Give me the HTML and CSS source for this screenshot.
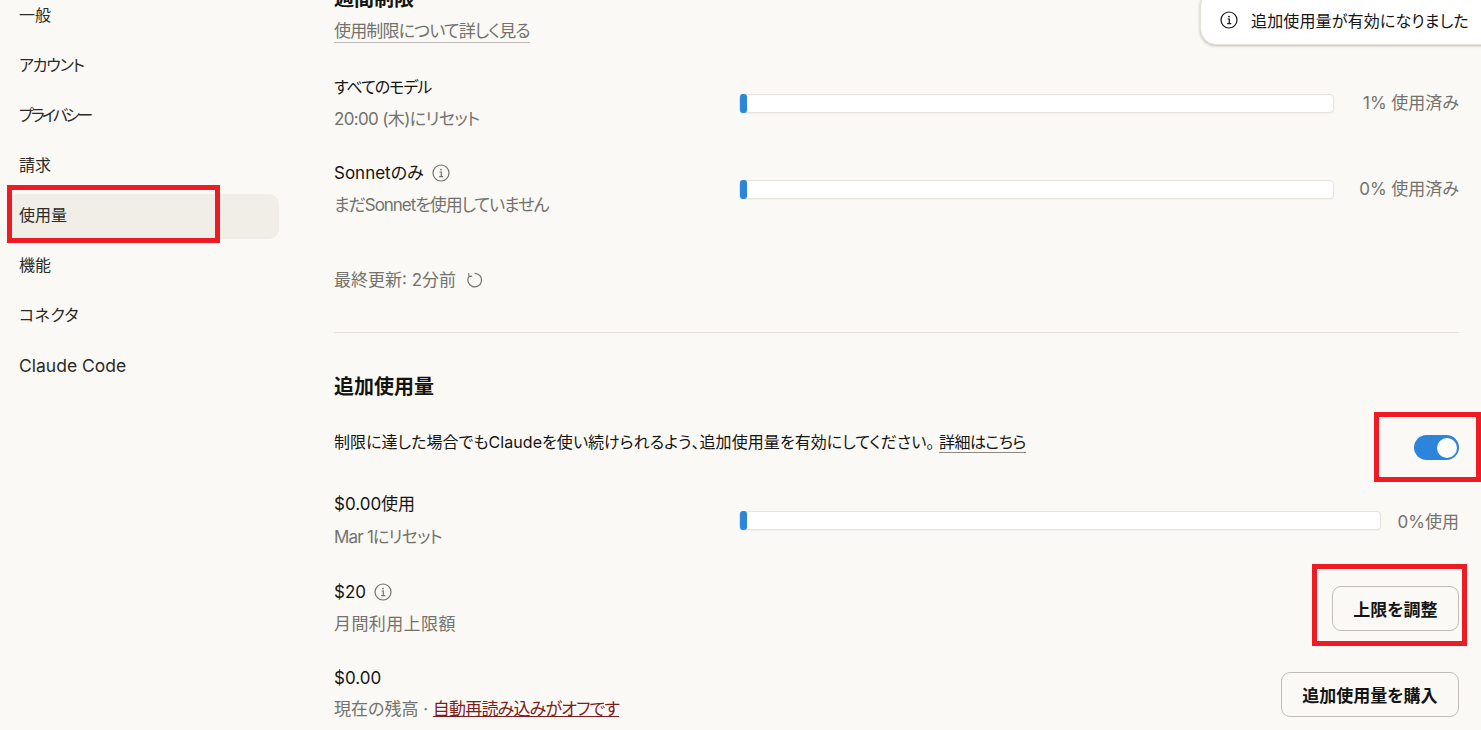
FILE: index.html
```html
<!DOCTYPE html>
<html lang="ja">
<head>
<meta charset="utf-8">
<title>使用量</title>
<link rel="stylesheet" href="styles.css">
</head>
<body>
<div class="page">
  <nav class="side">
    <a class="nav">一般</a>
    <a class="nav n-acct">アカウント</a>
    <a class="nav n-priv">プライバシー</a>
    <a class="nav">請求</a>
    <a class="nav active">使用量</a>
    <a class="nav">機能</a>
    <a class="nav n-conn">コネクタ</a>
    <a class="nav n-code">Claude Code</a>
  </nav>
  <main class="main">
    <h2 class="head first">週間制限</h2>
    <a class="learn">使用制限について詳しく見る</a>
    <div class="row r-all">
      <div class="lbl"><div class="t t-all">すべてのモデル</div><div class="s s-time">20:00 (木)にリセット</div></div>
      <div class="bar"><i></i></div>
      <div class="pct">1% 使用済み</div>
    </div>
    <div class="row r-son">
      <div class="lbl"><div class="t">Sonnetのみ <svg class="info" viewBox="0 0 18 18"><circle cx="9" cy="9" r="8" /><path d="M7.6 8h1.7v4.6M7.2 12.6h4"/><circle class="dot" cx="9" cy="5.6" r=".9"/></svg></div><div class="s s-none">まだSonnetを使用していません</div></div>
      <div class="bar"><i></i></div>
      <div class="pct">0% 使用済み</div>
    </div>
    <div class="updated">最終更新: 2分前 <svg class="refresh" viewBox="0 0 16 16"><path d="M8.6 1.3A6.8 6.8 0 1 1 3 4.4M2.6 1.2L3 4.6L6.2 4.2"/></svg></div>
    <hr class="rule">
    <h2 class="head">追加使用量</h2>
    <div class="desc">
      <p>制限に達した場合でもClaudeを使い続けられるよう、追加使用量を有効にしてください。 <a class="more">詳細はこちら</a></p>
      <span class="toggle"><b></b></span>
    </div>
    <div class="row r-extra">
      <div class="lbl"><div class="t">$0.00使用</div><div class="s s-mar">Mar 1にリセット</div></div>
      <div class="bar wide"><i></i></div>
      <div class="pct short">0%使用</div>
    </div>
    <div class="row r-limit">
      <div class="lbl"><div class="t">$20 <svg class="info" viewBox="0 0 18 18"><circle cx="9" cy="9" r="8"/><path d="M7.6 8h1.7v4.6M7.2 12.6h4"/><circle class="dot" cx="9" cy="5.6" r=".9"/></svg></div><div class="s s-cap">月間利用上限額</div></div>
      <button class="btn">上限を調整</button>
    </div>
    <div class="row r-bal">
      <div class="lbl"><div class="t">$0.00</div><div class="s s-bal">現在の残高 · <a class="auto">自動再読み込みがオフです</a></div></div>
      <button class="btn">追加使用量を購入</button>
    </div>
  </main>
</div>
<div class="toast"><svg class="tinfo" viewBox="0 0 18 18"><circle cx="9" cy="9" r="8"/><path d="M7.6 8h1.7v4.6M7.2 12.6h4"/><circle class="dot" cx="9" cy="5.6" r=".9"/></svg><span>追加使用量が有効になりました</span></div>
<div class="mark m1"></div>
<div class="mark m2"></div>
<div class="mark m3"></div>
</body>
</html>
```
FILE: styles.css
```css
* { box-sizing: border-box; }
html, body { margin: 0; height: 730px; overflow: hidden; background: #faf9f5; }
body { font-family: "Inter", "Noto Sans CJK JP", sans-serif; font-size: 16px; color: #141413; font-feature-settings: "palt"; position: relative; }
.page { display: flex; height: 730px; overflow: hidden; }
.side { width: 271px; margin-left: 8px; margin-top: -6px; display: flex; flex-direction: column; gap: 5px; flex: none; }
.nav { height: 45px; display: flex; align-items: center; padding: 0 0 6px 11px; border-radius: 10px; font-size: 16px; color: #2b2a27; }
.active { background: #f0eee6; }
.n-acct { letter-spacing: -1.2px; }
.n-priv { letter-spacing: -2.8px; }
.n-conn { letter-spacing: .4px; }
.n-code { font-size: 17.5px; padding-bottom: 2px; }
.main { margin-left: 55px; width: 1125px; flex: none; display: flex; flex-direction: column; margin-top: -14px; }
.head { margin: 0; font-size: 20px; font-weight: 700; line-height: 26px; }
.first { height: 26px; }
.learn { align-self: flex-start; margin-top: 8px; font-size: 17px; letter-spacing: -.85px; line-height: 22px; color: #73726c; border-bottom: 1px solid #bcbab2; }
.row { display: flex; align-items: center; }
.lbl { width: 405px; flex: none; }
.t { font-size: 17px; line-height: 24px; display: flex; align-items: center; gap: 8px; }
.t-all { font-size: 16px; letter-spacing: -1px; }
.s { font-size: 17px; line-height: 24px; margin-top: 8px; color: #73726c; }
.s-time { letter-spacing: -.65px; }
.s-none { letter-spacing: -1.05px; }
.s-mar { letter-spacing: -.8px; margin-top: 9px; }
.s-cap { letter-spacing: .4px; }
.s-bal { margin-top: 7px; }
.bar { flex: 1; height: 19px; background: #fff; border: 1px solid #e6e4dc; border-radius: 4px; box-shadow: 0 1px 1px rgba(0,0,0,.04); }
.bar i { display: block; width: 7px; height: 19px; margin: -1px 0 0 -0.5px; background: #2c84db; border-radius: 3px; }
.pct { width: 125px; flex: none; text-align: right; color: #73726c; font-size: 17px; padding-bottom: 4px; }
.pct.short { width: 78px; padding-bottom: 0; }
.r-all { margin-top: 32px; }
.r-son { margin-top: 30px; }
.updated { margin-top: 51px; color: #73726c; font-size: 17px; line-height: 24px; display: flex; align-items: center; gap: 10px; }
.rule { width: 100%; margin: 40px 0 0; border: 0; border-top: 1px solid #e3e1d9; }
.rule + .head { margin-top: 41px; }
.desc { display: flex; justify-content: space-between; align-items: flex-start; margin-top: 30px; }
.desc p { margin: 0; line-height: 24px; letter-spacing: .05px; }
.more { border-bottom: 1px solid #8a8880; letter-spacing: -.5px; }
.toggle { width: 45px; height: 25px; margin-top: 5px; border-radius: 13px; background: #2c84db; display: flex; justify-content: flex-end; align-items: center; padding-right: 2px; }
.toggle b { width: 20px; height: 20px; border-radius: 50%; background: #fff; }
.r-extra { margin-top: 32px; }
.r-limit { margin-top: 31px; justify-content: space-between; }
.r-bal { margin-top: 30px; justify-content: space-between; }
.btn { height: 45px; margin-top: 1px; padding: 0 20.5px; background: transparent; border: 1px solid #bfbdb5; border-radius: 9px; font: inherit; font-size: 17px; font-weight: 700; font-feature-settings: inherit; color: #141413; }
.auto { color: #7f1d1d; text-decoration: underline; letter-spacing: -.8px; }
svg { fill: none; stroke: currentColor; stroke-width: 1.2; }
.dot { fill: currentColor; stroke: none; }
.info { width: 18px; height: 18px; color: #73726c; flex: none; }
.refresh { width: 16px; height: 16px; color: #73726c; }
.toast { position: absolute; left: 1200px; top: -10px; width: 300px; height: 55px; display: flex; align-items: center; gap: 13px; padding: 4px 0 0 19px; background: #fff; border: 1px solid #e3e1d9; border-radius: 16px; box-shadow: 0 1px 3px rgba(0,0,0,.25); font-size: 16px; letter-spacing: .15px; }
.tinfo { width: 18px; height: 18px; flex: none; }
.mark { position: absolute; border: 5px solid #ed1c24; }
.m1 { left: 7px; top: 185px; width: 213px; height: 58px; }
.m2 { left: 1374px; top: 412px; width: 107px; height: 70px; }
.m3 { left: 1312px; top: 564px; width: 155px; height: 82px; }
```
